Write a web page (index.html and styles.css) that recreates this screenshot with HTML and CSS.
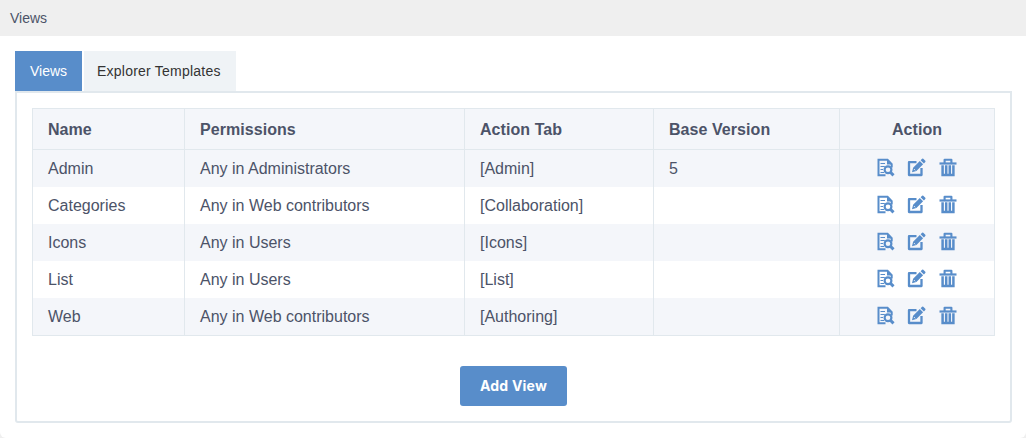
FILE: index.html
```html
<!DOCTYPE html>
<html lang="en">
<head>
<meta charset="utf-8">
<title>Views</title>
<link rel="stylesheet" href="styles.css">
</head>
<body>
<svg class="sprite" aria-hidden="true">
  <symbol id="preview" viewBox="-.5 0 19 20">
    <path d="M15.2 9.5V6.2L11 1.7H2V17.2H9" fill="none" stroke="currentColor" stroke-width="2"/>
    <path d="M10.5 2V6.5H15Z" fill="currentColor"/>
    <path d="M4 5.5H8.5M4 8.5H8.3M4 11.5H6.5M4 14.5H7.5" fill="none" stroke="currentColor" stroke-width="1"/>
    <circle cx="11.5" cy="11.8" r="3.4" fill="none" stroke="currentColor" stroke-width="2.2"/>
    <path d="M13.9 14.2L17 17.4" stroke="currentColor" stroke-width="3"/>
  </symbol>
  <symbol id="edit" viewBox="0 0 19 20">
    <path d="M9.5 4.2H2V17H14.5V10" fill="none" stroke="currentColor" stroke-width="2.3" stroke-linejoin="round"/>
    <path d="M5 14.2L6.1 9.7L12.8 3L16.1 6.3L9.4 13ZM13.6 2.2L15.1 .8Q15.7 .2 16.3 .8L18.3 2.8Q18.8 3.3 18.3 3.9L16.9 5.4Z" fill="currentColor"/>
    <path d="M6.9 11L8.2 12.3" stroke="#fff" stroke-width=".8"/>
  </symbol>
  <symbol id="trash" viewBox="0 0 18 20">
    <path d="M5.6 5V1.8H12.4V5" fill="none" stroke="currentColor" stroke-width="2.1" stroke-linejoin="round"/>
    <path d="M.5 4.4H17.5V6.6H.5Z" fill="currentColor"/>
    <path d="M3.6 7.2V17H14.4V7.2M7.2 7.2V17M10.8 7.2V17" fill="none" stroke="currentColor" stroke-width="2.5"/>
  </symbol>
</svg>
<main class="page">
  <header class="title">Views</header>
  <div class="content">
    <nav class="tabs"><a class="tab active">Views</a><a class="tab">Explorer Templates</a></nav>
    <section class="panel">
      <table class="views">
        <colgroup><col class="c-name"><col class="c-perm"><col class="c-tab"><col class="c-base"><col class="c-action"></colgroup>
        <thead><tr><th>Name</th><th>Permissions</th><th>Action Tab</th><th>Base Version</th><th class="center">Action</th></tr></thead>
        <tbody>
          <tr><td>Admin</td><td>Any in Administrators</td><td>[Admin]</td><td>5</td><td><div class="actions"><svg class="i-preview"><use href="#preview"/></svg><svg class="i-edit"><use href="#edit"/></svg><svg class="i-trash"><use href="#trash"/></svg></div></td></tr>
          <tr><td>Categories</td><td>Any in Web contributors</td><td>[Collaboration]</td><td></td><td><div class="actions"><svg class="i-preview"><use href="#preview"/></svg><svg class="i-edit"><use href="#edit"/></svg><svg class="i-trash"><use href="#trash"/></svg></div></td></tr>
          <tr><td>Icons</td><td>Any in Users</td><td>[Icons]</td><td></td><td><div class="actions"><svg class="i-preview"><use href="#preview"/></svg><svg class="i-edit"><use href="#edit"/></svg><svg class="i-trash"><use href="#trash"/></svg></div></td></tr>
          <tr><td>List</td><td>Any in Users</td><td>[List]</td><td></td><td><div class="actions"><svg class="i-preview"><use href="#preview"/></svg><svg class="i-edit"><use href="#edit"/></svg><svg class="i-trash"><use href="#trash"/></svg></div></td></tr>
          <tr><td>Web</td><td>Any in Web contributors</td><td>[Authoring]</td><td></td><td><div class="actions"><svg class="i-preview"><use href="#preview"/></svg><svg class="i-edit"><use href="#edit"/></svg><svg class="i-trash"><use href="#trash"/></svg></div></td></tr>
        </tbody>
      </table>
      <button class="add">Add View</button>
    </section>
  </div>
</main>
</body>
</html>
```

FILE: styles.css
```css
* { box-sizing: border-box; }
body { margin: 0; background: #efefef; color: #4c5368; font: 16px "Liberation Sans", Arial, sans-serif; }
.sprite { display: none; }
.page { height: 438px; background: #fff; border-radius: 0 0 6px 6px; overflow: hidden; }
.title { height: 36px; padding-left: 10px; background: #efefef; font-size: 14px; line-height: 36px; }
.content { padding: 15px 14px 0 15px; }
.tabs { display: flex; gap: 2px; height: 40px; }
.tab { padding: 0 15px 0 13px; background: #eff3f6; color: #333; font-size: 14px; line-height: 40px; letter-spacing: .23px; }
.tab.active { width: 67px; padding: 0 0 0 15px; background: #588dca; color: #fff; letter-spacing: 0; }
.panel { display: flex; flex-direction: column; align-items: center; height: 332px; padding: 15px; border: 2px solid #e1e8ed; border-radius: 0 0 3px 3px; }
.views { width: 963px; table-layout: fixed; border-collapse: separate; border-spacing: 0; border: 1px solid #e1e8ed; }
.c-name { width: 152px; }
.c-perm { width: 280px; }
.c-tab { width: 189px; }
.c-base { width: 186px; }
.c-action { width: 154px; }
.views th, .views td { padding: 0 15px; border-right: 1px solid #e1e8ed; text-align: left; white-space: nowrap; }
.views th:last-child, .views td:last-child { border-right: 0; }
.views th { height: 41px; padding-top: 2px; background: #f4f6fa; border-bottom: 1px solid #e1e8ed; letter-spacing: .06px; }
.views th.center { text-align: center; }
.views td { height: 37px; }
.views tbody tr:nth-child(odd) { background: #f4f6fa; }
.actions { display: flex; justify-content: center; gap: 13px; height: 20px; margin: -1px 1px 0 -1px; color: #588dca; }
.actions svg { flex: none; height: 20px; }
.i-preview { width: 19px; margin-right: -1px; }
.i-edit { width: 19px; }
.i-trash { width: 18px; }
.add { width: 107px; height: 40px; margin-top: 30px; padding: 0 0 2px; border: 0; border-radius: 3px; background: #588dca; color: #fff; font: bold 14px Inter, sans-serif; letter-spacing: .2px; }
```
